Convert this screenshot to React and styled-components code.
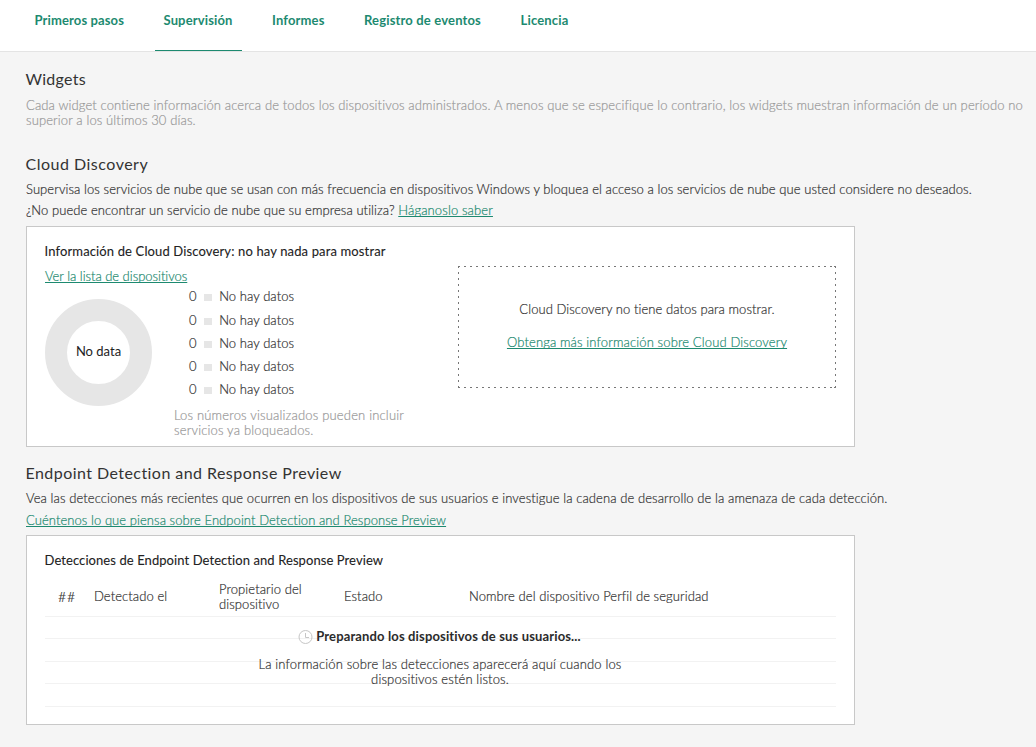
import React from 'react';
import styled, { createGlobalStyle } from 'styled-components';

const Global = createGlobalStyle`
  * { box-sizing: border-box; }
  body { margin: 0; background: #f5f5f5; }
  h2, h3, p { margin: 0; }
`;

const Page = styled.div`
  width: 1036px;
  height: 747px;
  overflow: hidden;
  background: #f5f5f5;
  color: #333;
  font: 300 13px/15px Lato, 'Noto Sans', sans-serif;
  -webkit-text-stroke: 0.2px currentColor;
`;

const Nav = styled.nav`
  display: flex;
  gap: 21.5px;
  height: 52px;
  padding-left: 25.5px;
  background: #fff;
  border-bottom: 1px solid #e4e4e4;
  -webkit-text-stroke: 0;
`;

const Tab = styled.a`
  height: 51px;
  padding: 13px 9px 0;
  font-weight: 700;
  color: #1d8a70;
  white-space: nowrap;
  letter-spacing: ${(p) => p.$ls}px;
  border-bottom: 1px solid ${(p) => (p.$active ? '#1d8a70' : 'transparent')};
`;

const Content = styled.main`
  padding: 17px 0 0 26px;
`;

const Section = styled.section`
  margin-bottom: ${(p) => p.$gap}px;
`;

const Heading = styled.h2`
  margin-left: -0.5px;
  font-size: 16px;
  line-height: 20px;
  font-weight: 400;
  letter-spacing: ${(p) => p.$ls}px;
  color: #333;
  -webkit-text-stroke: 0;
`;

const Text = styled.p`
  margin-top: ${(p) => p.$top || 0}px;
  letter-spacing: ${(p) => p.$ls}px;
  color: ${(p) => (p.$muted ? '#999' : '#333')};
  white-space: nowrap;
`;

const Link = styled.a`
  color: #1d8a70;
  letter-spacing: ${(p) => p.$ls}px;
  text-decoration: underline;
  text-underline-offset: 1px;
  text-decoration-thickness: 1px;
  text-decoration-skip-ink: none;
`;

const Card = styled.div`
  width: 829px;
  height: ${(p) => p.$h}px;
  margin-top: ${(p) => p.$top}px;
  padding: 17px 18px 0;
  background: #fff;
  border: 1px solid #c8c8c8;
`;

const CloudCard = styled(Card)`
  display: flex;
  justify-content: space-between;
`;

const CardTitle = styled.h3`
  margin-left: -0.5px;
  font-size: 13px;
  line-height: 15px;
  font-weight: 400;
  letter-spacing: ${(p) => p.$ls}px;
  color: #222;
  white-space: nowrap;
  -webkit-text-stroke: 0.1px currentColor;
`;

const Stats = styled.div`
  display: flex;
  margin-top: 4px;
`;

const Donut = styled.div`
  display: flex;
  align-items: center;
  justify-content: center;
  width: 107px;
  height: 107px;
  margin-top: 11px;
  border: 22px solid #e6e6e6;
  border-radius: 50%;
  font-weight: 400;
  color: #222;
  white-space: nowrap;
  -webkit-text-stroke: 0;
`;

const DonutLabel = styled.span`
  margin-top: -2px;
`;

const Legend = styled.div`
  margin: -4px 0 0 22px;
`;

const LegendRow = styled.div`
  display: flex;
  align-items: center;
  height: ${(p) => p.$h}px;
  padding-left: 15px;
  letter-spacing: 0.08px;
`;

const Swatch = styled.i`
  width: 8px;
  height: 7px;
  margin: 2px 7.5px 0 7px;
  background: #e6e6e6;
`;

const dots = (dir) => `repeating-linear-gradient(${dir}, #777 0 2px, transparent 2px 6px)`;

const EmptyBox = styled.div`
  width: 378px;
  height: 122px;
  margin-top: 22px;
  padding-top: 36px;
  text-align: center;
  background:
    ${dots('to right')} 0 0 / 100% 1px no-repeat,
    ${dots('to right')} 0 100% / 100% 1px no-repeat,
    ${dots('to bottom')} 0 0 / 1px 100% no-repeat,
    ${dots('to bottom')} 100% 0 / 1px 100% no-repeat,
    linear-gradient(#777, #777) 100% 0 / 2px 1px no-repeat,
    linear-gradient(#777, #777) 100% 100% / 2px 1px no-repeat;
`;

const TableHead = styled.div`
  display: grid;
  grid-template-columns: 49px 125px 125px 125px 1fr;
  align-items: center;
  height: 48px;
  padding-top: 9px;
`;

const HeadCell = styled.span`
  white-space: nowrap;
  letter-spacing: 0.08px;
`;

const NumberCell = styled(HeadCell)`
  padding-left: 13px;
  font-size: 14px;
  letter-spacing: 1px;
`;

const Lines = styled.div`
  position: relative;
`;

const Line = styled.div`
  height: ${(p) => p.$h}px;
  border-top: 1px solid #f2f2f2;
`;

const Notice = styled.div`
  position: absolute;
  inset: 13px 1px auto 0;
  text-align: center;
`;

const NoticeTitle = styled.div`
  display: flex;
  justify-content: center;
  gap: 3px;
  margin-right: 1px;
  font-weight: 700;
  letter-spacing: 0.14px;
  color: #2b2b2b;
  -webkit-text-stroke: 0;
`;

const Clock = () => (
  <svg width="15" height="15" viewBox="0 0 15 15" fill="none" stroke="#c6c6c6">
    <circle cx="7.5" cy="8" r="6.5" />
    <path d="M7.5 4v4.5H11" />
  </svg>
);

const tabs = [
  ['Primeros pasos', 0.121],
  ['Supervisión', 0.135, true],
  ['Informes', 0.146],
  ['Registro de eventos', 0.161],
  ['Licencia', 0.17],
];

export default function App() {
  return (
    <Page>
      <Global />
      <Nav>
        {tabs.map(([label, ls, active]) => (
          <Tab key={label} $ls={ls} $active={active}>{label}</Tab>
        ))}
      </Nav>
      <Content>
        <Section $gap={26}>
          <Heading $ls={0.25}>Widgets</Heading>
          <Text $top={9} $ls={0.124} $muted>
            Cada widget contiene información acerca de todos los dispositivos administrados. A menos que se especifique lo contrario, los widgets muestran información de un período no
            <br />superior a los últimos 30 días.
          </Text>
        </Section>
        <Section $gap={16}>
          <Heading $ls={0.5}>Cloud Discovery</Heading>
          <Text $top={8} $ls={0.08}>
            Supervisa los servicios de nube que se usan con más frecuencia en dispositivos Windows y bloquea el acceso a los servicios de nube que usted considere no deseados.
          </Text>
          <Text $top={6} $ls={0.075}>
            ¿No puede encontrar un servicio de nube que su empresa utiliza? <Link $ls={0.13}>Háganoslo saber</Link>
          </Text>
          <CloudCard $h={221} $top={8}>
            <div>
              <CardTitle $ls={0.135}>Información de Cloud Discovery: no hay nada para mostrar</CardTitle>
              <Text $top={10}><Link $ls={-0.022}>Ver la lista de dispositivos</Link></Text>
              <Stats>
                <Donut><DonutLabel>No data</DonutLabel></Donut>
                <Legend>
                  {[24, 24, 23, 23, 23].map((h, i) => (
                    <LegendRow key={i} $h={h}>0<Swatch />No hay datos</LegendRow>
                  ))}
                  <Text $top={7} $ls={0.18} $muted>
                    Los números visualizados pueden incluir
                    <br />servicios ya bloqueados.
                  </Text>
                </Legend>
              </Stats>
            </div>
            <EmptyBox>
              <Text $ls={0.065}>Cloud Discovery no tiene datos para mostrar.</Text>
              <Text $top={18}><Link $ls={0.13}>Obtenga más información sobre Cloud Discovery</Link></Text>
            </EmptyBox>
          </CloudCard>
        </Section>
        <Section $gap={0}>
          <Heading $ls={0.445}>Endpoint Detection and Response Preview</Heading>
          <Text $top={8} $ls={0.09}>
            Vea las detecciones más recientes que ocurren en los dispositivos de sus usuarios e investigue la cadena de desarrollo de la amenaza de cada detección.
          </Text>
          <Text $top={7}><Link $ls={0.07}>Cuéntenos lo que piensa sobre Endpoint Detection and Response Preview</Link></Text>
          <Card $h={190} $top={7}>
            <CardTitle $ls={0.08}>Detecciones de Endpoint Detection and Response Preview</CardTitle>
            <TableHead>
              <NumberCell>##</NumberCell>
              <HeadCell>Detectado el</HeadCell>
              <HeadCell>Propietario del<br />dispositivo</HeadCell>
              <HeadCell>Estado</HeadCell>
              <HeadCell>Nombre del dispositivo Perfil de seguridad</HeadCell>
            </TableHead>
            <Lines>
              {[22, 23, 22, 23, 1].map((h, i) => <Line key={i} $h={h} />)}
              <Notice>
                <NoticeTitle><Clock />Preparando los dispositivos de sus usuarios...</NoticeTitle>
                <Text $top={13} $ls={0.14}>
                  La información sobre las detecciones aparecerá aquí cuando los
                  <br />dispositivos estén listos.
                </Text>
              </Notice>
            </Lines>
          </Card>
        </Section>
      </Content>
    </Page>
  );
}
